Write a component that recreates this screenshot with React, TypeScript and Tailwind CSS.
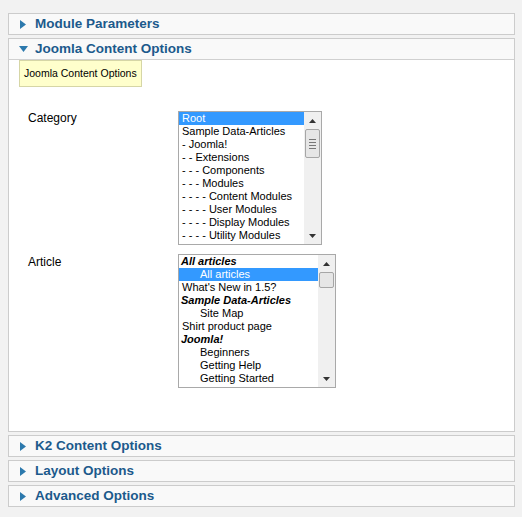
import React from 'react'

type Row = { text: string; group?: boolean; indent?: boolean; selected?: boolean }

const categoryRows: Row[] = [
    { text: 'Root', selected: true },
    { text: 'Sample Data-Articles' },
    { text: '- Joomla!' },
    { text: '- - Extensions' },
    { text: '- - - Components' },
    { text: '- - - Modules' },
    { text: '- - - - Content Modules' },
    { text: '- - - - User Modules' },
    { text: '- - - - Display Modules' },
    { text: '- - - - Utility Modules' },
]

const articleRows: Row[] = [
    { text: 'All articles', group: true },
    { text: 'All articles', indent: true, selected: true },
    { text: "What's New in 1.5?" },
    { text: 'Sample Data-Articles', group: true },
    { text: 'Site Map', indent: true },
    { text: 'Shirt product page' },
    { text: 'Joomla!', group: true },
    { text: 'Beginners', indent: true },
    { text: 'Getting Help', indent: true },
    { text: 'Getting Started', indent: true },
]

const ArrowRight = () => (
    <svg width="6" height="9" viewBox="0 0 6 9" className="shrink-0">
        <path d="M0 0 L6 4.5 L0 9 Z" fill="#2c79ad" />
    </svg>
)

const ArrowDown = () => (
    <svg width="9" height="6" viewBox="0 0 9 6" className="shrink-0">
        <path d="M0 0 L9 0 L4.5 6 Z" fill="#2c79ad" />
    </svg>
)

const PanelHeader: React.FC<{ title: string; open?: boolean }> = ({ title, open }) => (
    <div className={`bg-[#f9f9f9] flex items-center ${open ? 'h-[21px] pl-[10px] gap-[7px] border-b border-[#d0d0d0]' : 'h-[20px] pl-[11px] gap-[9px]'}`}>
        {open ? <ArrowDown /> : <ArrowRight />}
        <span className="text-[13.5px] font-bold text-[#1c5a8c] leading-none">{title}</span>
    </div>
)

const Closed: React.FC<{ title: string }> = ({ title }) => (
    <div className="border border-[#cccccc] mb-[3px]">
        <PanelHeader title={title} />
    </div>
)

const Scrollbar: React.FC<{ thumb: number }> = ({ thumb }) => (
    <div className="w-[17px] shrink-0 bg-[#f0f0f0] flex flex-col">
        <div className="h-[17px] flex items-center justify-center">
            <svg width="7" height="4" viewBox="0 0 7 4"><path d="M0 4 L3.5 0 L7 4 Z" fill="#333" /></svg>
        </div>
        <div className="flex-1 px-[1px]">
            <div
                className="w-full rounded-[2px] border border-[#a6a6a6] bg-[#e6e6e6] flex flex-col items-center justify-center gap-[2px]"
                style={{ height: thumb }}
            >
                {thumb > 20 && (
                    <>
                        <div className="w-[7px] h-px bg-[#777]" />
                        <div className="w-[7px] h-px bg-[#777]" />
                        <div className="w-[7px] h-px bg-[#777]" />
                        <div className="w-[7px] h-px bg-[#777]" />
                    </>
                )}
            </div>
        </div>
        <div className="h-[17px] flex items-center justify-center">
            <svg width="7" height="4" viewBox="0 0 7 4"><path d="M0 0 L7 0 L3.5 4 Z" fill="#333" /></svg>
        </div>
    </div>
)

const ListBox: React.FC<{ rows: Row[]; width: number; thumb: number }> = ({ rows, width, thumb }) => (
    <div className="h-[134px] border border-[#a9a9a9] bg-white flex" style={{ width }}>
        <div className="flex-1 overflow-hidden">
            {rows.map((r, i) => (
                <div
                    key={i}
                    className={`h-[13px] leading-[13px] text-[11px] whitespace-nowrap ${r.indent ? 'pl-[21px]' : r.group ? 'pl-[2px]' : 'pl-[3px]'} ${r.group ? 'font-bold italic text-black' : ''} ${r.selected ? 'bg-[#3399ff] text-white' : 'text-black'}`}
                >
                    {r.text}
                </div>
            ))}
        </div>
        <Scrollbar thumb={thumb} />
    </div>
)

export default function App() {
    return (
        <div className="w-[522px] h-[517px] bg-[#f2f2f2] pt-[13px] pl-[8px] pr-[7px] font-['Liberation_Sans',Arial,sans-serif]">
            <Closed title="Module Parameters" />

            <div className="border border-[#cccccc] mb-[3px]">
                <PanelHeader title="Joomla Content Options" open />
                <div className="bg-white h-[371px] pl-[10px]">
                    <div className="inline-block border border-[#d6d6a6] bg-[#ffffcc] px-[4px] h-[27px] leading-[25px] text-[10.5px] text-black">
                        Joomla Content Options
                    </div>

                    <div className="mt-[24px] flex flex-col gap-[9px] text-[12px] text-black">
                        <div className="flex">
                            <div className="w-[159px] pl-[9px] leading-[15px]">Category</div>
                            <ListBox rows={categoryRows} width={144} thumb={29} />
                        </div>
                        <div className="flex">
                            <div className="w-[159px] pl-[9px] pt-[1px] leading-[15px]">Article</div>
                            <ListBox rows={articleRows} width={158} thumb={16} />
                        </div>
                    </div>
                </div>
            </div>

            <Closed title="K2 Content Options" />
            <Closed title="Layout Options" />
            <Closed title="Advanced Options" />
        </div>
    )
}
